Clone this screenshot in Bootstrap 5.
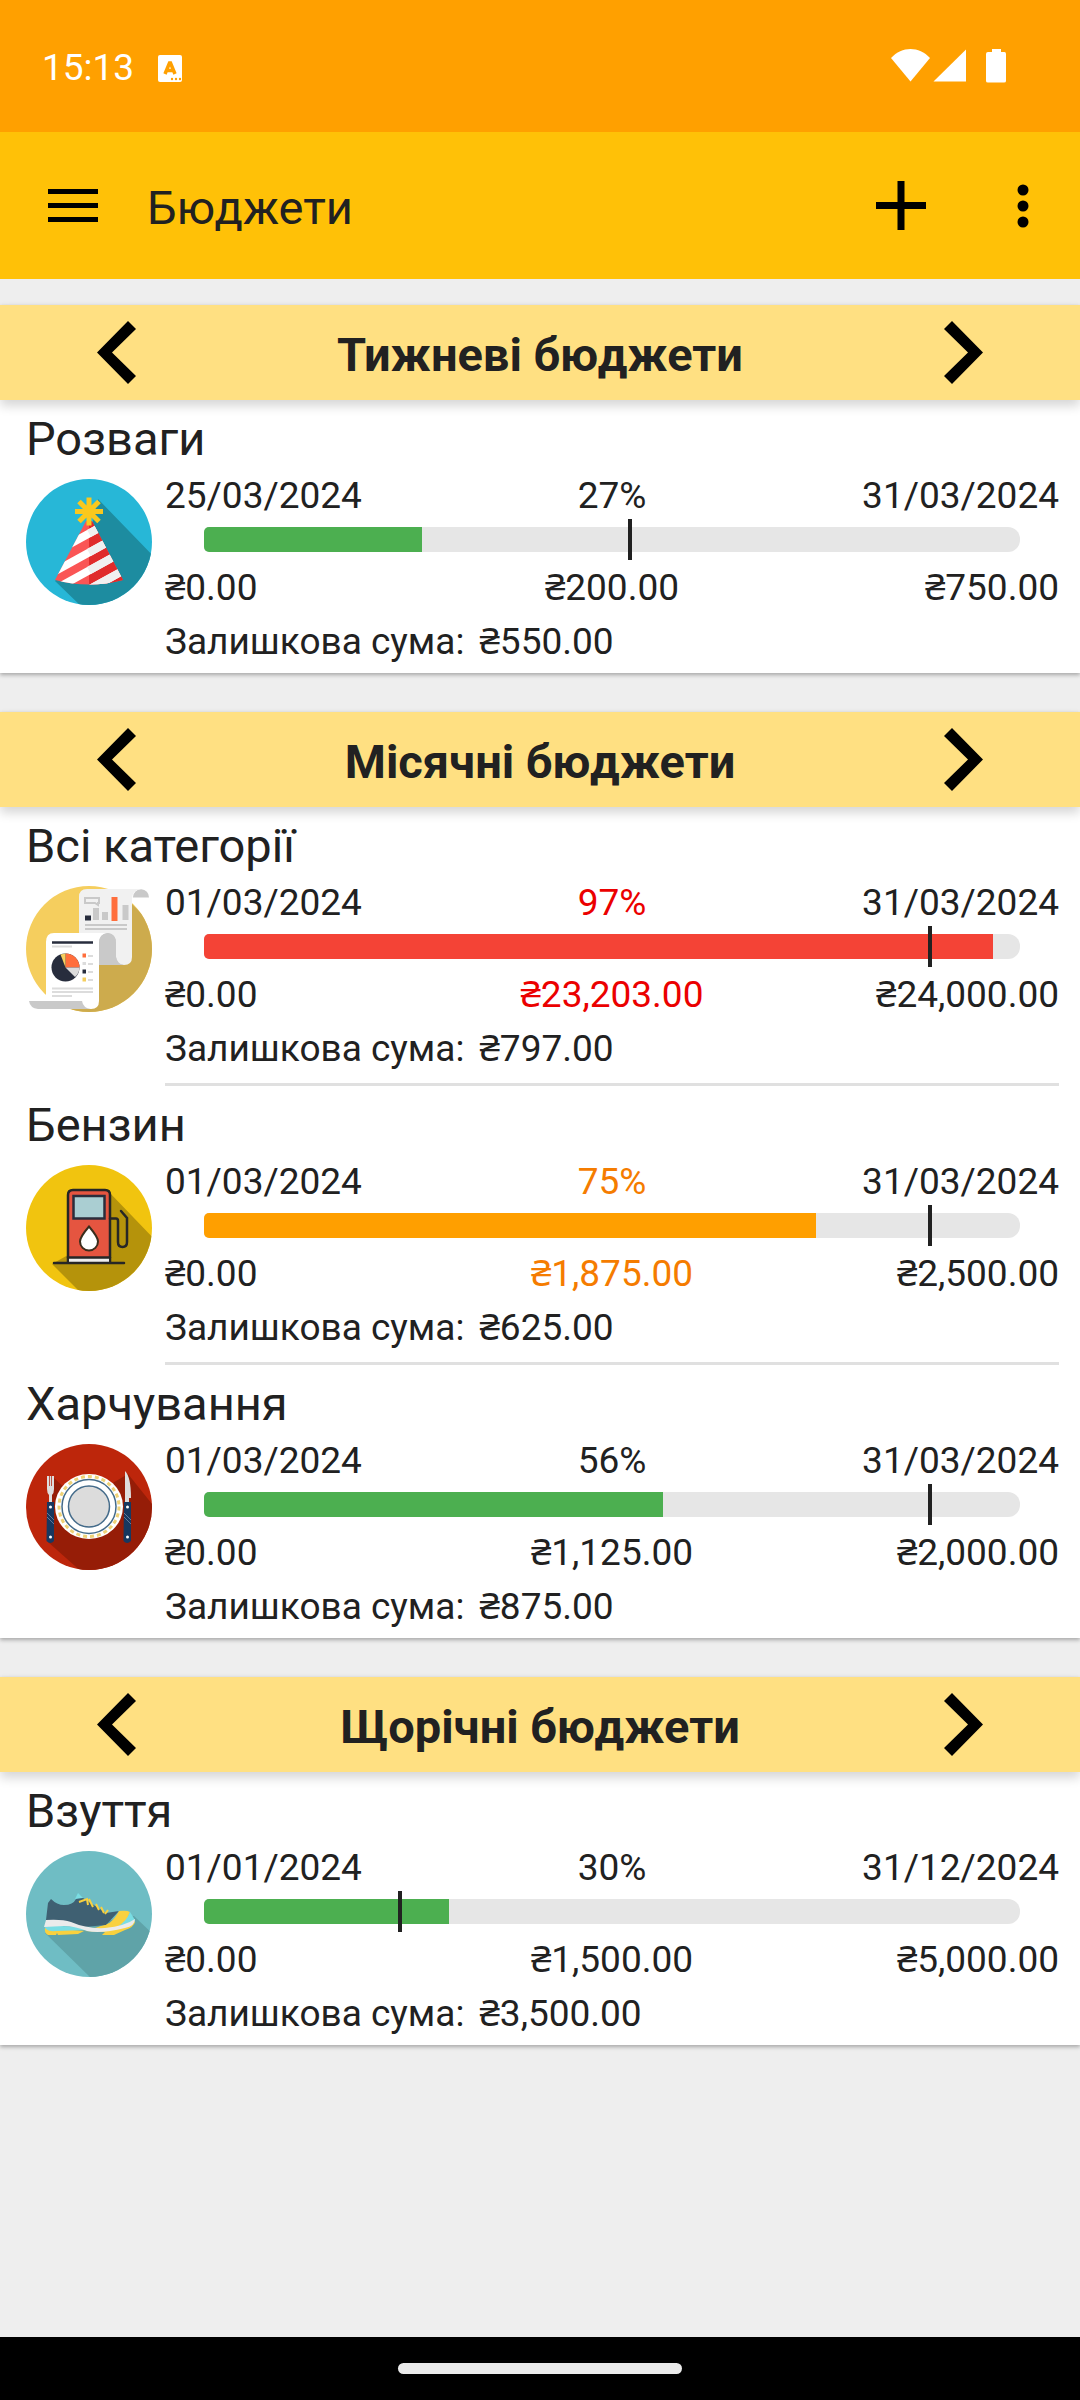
<!DOCTYPE html>
<html lang="uk">
<head>
<meta charset="utf-8">
<meta name="viewport" content="width=device-width, initial-scale=1">
<title>Бюджети</title>
<link href="https://cdn.jsdelivr.net/npm/bootstrap@5.3.0/dist/css/bootstrap.min.css" rel="stylesheet">
<style>
  body { font-family: Roboto, "Noto Sans", sans-serif; font-size: 37px; line-height: 44px; color: #212121; background: #eee; }
  .status-strip { background: #ffa000; height: 132px; padding: 0 74px 0 42px; }
  .app-bar { background: #ffc107; height: 147px; padding: 0 48px; }
  .app-title { font-size: 47px; line-height: 56px; padding: 4px 0 0 49px; font-weight: 400; }
  .plain-btn { background: none; border: 0; padding: 0; line-height: 0; color: #000; }
  .budget-list { padding-top: 26px; }
  .budget-group { margin-bottom: 39px; background: #fff; box-shadow: 0 2px 4px rgba(0,0,0,.3); }
  .group-head { height: 95px; padding: 0 97px; background: #ffe082; box-shadow: 0 6px 10px rgba(0,0,0,.16); }
  .group-title { font-size: 47px; line-height: 56px; font-weight: 700; padding-top: 4px; }
  .budget-item { padding: 11px 21px 9px 26px; }
  .item-title { font-size: 47px; line-height: 56px; font-weight: 400; margin-bottom: 7px; }
  .item-icon { width: 126px; height: 126px; margin: 5px 13px 0 0; }
  .meter { position: relative; height: 41px; margin: 1px 39px 5px; }
  .meter .progress { height: 25px; border-radius: 5px 12px 12px 5px; background: #e6e6e6; }
  .meter .progress-bar { transition: none; }
  .today { position: absolute; top: 0; width: 4px; height: 41px; margin-left: -2px; background: #212121; }
  .sums { padding-top: 1px; }
  .rest { margin-top: 10px; }
  .rest-sum { margin-left: 6px; }
  .fill-ok { background: #4caf50; }
  .fill-warn { background: #ff9f00; }
  .fill-over { background: #f44336; }
  .ink-warn { color: #f57c00; }
  .ink-over { color: #eb0000; }
  .item-rule { height: 3px; margin: 3px 21px 0 165px; background: #e0e0e0; }
  .gesture-bar { height: 63px; background: #000; }
  .gesture-pill { width: 284px; height: 11px; border-radius: 6px; background: #ebebeb; }
</style>
<script src="https://cdn.jsdelivr.net/npm/bootstrap@5.3.0/dist/js/bootstrap.bundle.min.js"></script>
</head>
<body class="d-flex flex-column min-vh-100">

<div class="status-strip d-flex align-items-center justify-content-between text-white">
  <div class="d-flex align-items-center pt-1">
    <span>15:13</span>
    <svg class="ms-4" width="24" height="27" viewBox="0 0 24 27" aria-hidden="true">
      <rect width="24" height="27" rx="2" fill="#fff"/>
      <path d="M7 19L11.500 8H12.500L17 19M9 15.500H15" fill="none" stroke="#ffa000" stroke-width="3.500"/>
      <g fill="#ffa000"><circle cx="14" cy="24" r="1.200"/><circle cx="18" cy="24" r="1.200"/><circle cx="22" cy="24" r="1.200"/></g>
    </svg>
  </div>
  <svg width="115" height="34" viewBox="0 0 115 34" fill="#fff" aria-hidden="true">
    <path d="M0 9C11-3 28-3 39 9L19.500 32.500Z"/>
    <path d="M75 .5V32.500H42.500Z"/>
    <path d="M101 0H110V3H113.500Q115 3 115 5V32Q115 33.500 113 33.500H97Q95 33.500 95 32V5Q95 3 97 3H101Z"/>
  </svg>
</div>

<header class="app-bar d-flex align-items-center">
  <button type="button" class="plain-btn" aria-label="Меню">
    <svg width="50" height="34" viewBox="0 0 50 34"><path d="M0 2.500H50M0 16.500H50M0 30.500H50" stroke="#000" stroke-width="5"/></svg>
  </button>
  <h1 class="app-title mb-0 me-auto">Бюджети</h1>
  <button type="button" class="plain-btn" aria-label="Додати">
    <svg width="50" height="50" viewBox="0 0 50 50"><path d="M0 24.500H50M25 0V49" stroke="#000" stroke-width="7"/></svg>
  </button>
  <button type="button" class="plain-btn ms-5" aria-label="Більше">
    <svg width="58" height="44" viewBox="0 0 58 44"><circle cx="49" cy="6" r="5.500"/><circle cx="49" cy="22" r="5.500"/><circle cx="49" cy="38" r="5.500"/></svg>
  </button>
</header>

<main class="budget-list flex-grow-1">

  <section class="budget-group">
    <div class="group-head d-flex align-items-center justify-content-between">
      <button type="button" class="plain-btn" aria-label="Назад"><svg width="39" height="63" viewBox="0 0 39 63"><path d="M31 0L39 8L15 31.500L39 55L31 63L0 31.500Z"/></svg></button>
      <h2 class="group-title mb-0">Тижневі бюджети</h2>
      <button type="button" class="plain-btn" aria-label="Вперед"><svg width="39" height="63" viewBox="0 0 39 63"><path d="M8 0L0 8L24 31.500L0 55L8 63L39 31.500Z"/></svg></button>
    </div>
    <article class="budget-item">
      <h3 class="item-title">Розваги</h3>
      <div class="d-flex align-items-start">
        <svg class="item-icon flex-shrink-0" viewBox="0 0 126 126" aria-hidden="true">
          <clipPath id="disc"><circle cx="63" cy="63" r="63"/></clipPath>
          <clipPath id="cone"><path d="M60 42H66L97 101Q63 110 29 101Z"/></clipPath>
          <g clip-path="url(#disc)">
            <rect width="126" height="126" fill="#27b7d7"/>
            <path d="M72 20L130 80V130H58L29 102L63 60Z" fill="#1d8ca0"/>
          </g>
          <g clip-path="url(#cone)">
            <rect x="20" y="35" width="85" height="75" fill="#fa5555"/>
            <rect x="63" y="35" width="45" height="75" fill="#e02b2b"/>
            <path d="M13 82L113 27M13 101L113 46M13 119L113 64M13 138L113 83" stroke="#fff" stroke-width="8"/>
            <path d="M63 54.500L113 27M63 73.500L113 46M63 91.500L113 64M63 110.500L113 83" stroke="#f0f0f0" stroke-width="8"/>
          </g>
          <path d="M63 18.500V46.500M49 32.500H77M53 22.500L73 42.500M73 22.500L53 42.500" stroke="#fac81e" stroke-width="5"/>
          <circle cx="63" cy="32.500" r="5" fill="#fac81e"/>
        </svg>
        <div class="flex-grow-1">
          <div class="row g-0"><span class="col">25/03/2024</span><span class="col text-center">27%</span><span class="col text-end">31/03/2024</span></div>
          <div class="meter d-flex align-items-center">
            <div class="progress flex-grow-1" role="progressbar" aria-label="Розваги" aria-valuenow="27" aria-valuemin="0" aria-valuemax="100"><div class="progress-bar fill-ok" style="width:26.7%"></div></div>
            <div class="today" style="left:52.2%"></div>
          </div>
          <div class="row g-0 sums"><span class="col">₴0.00</span><span class="col text-center">₴200.00</span><span class="col text-end">₴750.00</span></div>
          <div class="rest">Залишкова сума: <span class="rest-sum">₴550.00</span></div>
        </div>
      </div>
    </article>
  </section>

  <section class="budget-group">
    <div class="group-head d-flex align-items-center justify-content-between">
      <button type="button" class="plain-btn" aria-label="Назад"><svg width="39" height="63" viewBox="0 0 39 63"><path d="M31 0L39 8L15 31.500L39 55L31 63L0 31.500Z"/></svg></button>
      <h2 class="group-title mb-0">Місячні бюджети</h2>
      <button type="button" class="plain-btn" aria-label="Вперед"><svg width="39" height="63" viewBox="0 0 39 63"><path d="M8 0L0 8L24 31.500L0 55L8 63L39 31.500Z"/></svg></button>
    </div>
    <article class="budget-item">
      <h3 class="item-title">Всі категорії</h3>
      <div class="d-flex align-items-start">
        <svg class="item-icon flex-shrink-0" viewBox="0 0 126 126" aria-hidden="true">
          <g clip-path="url(#disc)">
            <rect width="126" height="126" fill="#f5ce5e"/>
            <path d="M100 12L130 42V130H52L40 118L72 78Z" fill="#cdab4d"/>
          </g>
          <path d="M107 11A8 8 0 0 1 123 11.500H107Z" fill="#c9c9c9"/>
          <path d="M61 3H115Q106 4 106 13V71Q106 79 98 79H53V11Q53 3 61 3Z" fill="#f1f1f1"/>
          <path d="M73 79V47H82Q90 48 90 57V71Q91 78 98 79Z" fill="#c9c9c9"/>
          <path d="M59 12H73V17H72V19L69 17H59Z" fill="#f1f1f1" stroke="#c9c9c9" stroke-width="2"/>
          <path d="M68 34V22M77 34V26M97.500 34V19" transform="translate(2 0)" stroke="#c9c9c9" stroke-width="6"/>
          <path d="M88.500 35V11" stroke="#ff6e3c" stroke-width="6"/>
          <path d="M59 32H65" stroke="#272d3d" stroke-width="5"/>
          <path d="M59 39H101M59 43H101" stroke="#c9c9c9" stroke-width="2"/>
          <path d="M3 115H56L66 123H12Q4 122 3 115Z" fill="#c9c9c9"/>
          <path d="M28 47H82Q73 48 73 57V115Q73 123 65 123Q57 122 56 115H20V56Q20 47 28 47Z" fill="#fff"/>
          <path d="M73 79V57Q73 48 81.500 47Q90 48 90 57V79Z" fill="#c9c9c9"/>
          <path d="M90 57V71Q91 78 98 79H90Z" fill="#c9c9c9"/>
          <path d="M26 56.500H67" stroke="#272d3d" stroke-width="2.500"/>
          <path d="M26 60.500H46M26 102.500H67M26 106H67M26 110H46M62 70H67M62 78H67M62 86H67M62 94H67" stroke="#dcdcdc" stroke-width="2"/>
          <circle cx="39.500" cy="81.500" r="14" fill="#272d3d"/>
          <path d="M39.500 81.500V67.500A14 14 0 0 1 53.500 81.500Z" fill="#ff6e3c"/>
          <path d="M39.500 81.500H53.500Q53 88 49 91Z" fill="#dcdcdc"/>
          <path d="M39.500 81.500L34.500 68.500L39.500 67.500Z" fill="#f5ce5e"/>
          <path d="M56.500 69.500H60" stroke="#ff6e3c" stroke-width="4"/><path d="M56.500 77.500H60" stroke="#dcdcdc" stroke-width="3"/><path d="M56.500 85.500H60" stroke="#272d3d" stroke-width="4"/><path d="M56.500 93.500H60" stroke="#f5ce5e" stroke-width="4"/>
        </svg>
        <div class="flex-grow-1">
          <div class="row g-0"><span class="col">01/03/2024</span><span class="col text-center ink-over">97%</span><span class="col text-end">31/03/2024</span></div>
          <div class="meter d-flex align-items-center">
            <div class="progress flex-grow-1" role="progressbar" aria-label="Всі категорії" aria-valuenow="97" aria-valuemin="0" aria-valuemax="100"><div class="progress-bar fill-over" style="width:96.7%"></div></div>
            <div class="today" style="left:89%"></div>
          </div>
          <div class="row g-0 sums"><span class="col">₴0.00</span><span class="col text-center ink-over">₴23,203.00</span><span class="col text-end">₴24,000.00</span></div>
          <div class="rest">Залишкова сума: <span class="rest-sum">₴797.00</span></div>
        </div>
      </div>
    </article>
    <div class="item-rule"></div>
    <article class="budget-item">
      <h3 class="item-title">Бензин</h3>
      <div class="d-flex align-items-start">
        <svg class="item-icon flex-shrink-0" viewBox="0 0 126 126" aria-hidden="true">
          <g clip-path="url(#disc)">
            <rect width="126" height="126" fill="#f1c40f"/>
            <path d="M82 26L130 76V130H57L26 99L60 80Z" fill="#b5930b"/>
          </g>
          <path d="M42 97V30Q42 25 47 25H79Q84 25 84 30V97Z" fill="#e55540" stroke="#262626" stroke-width="2.500"/>
          <rect x="43" y="93" width="40" height="5" fill="#eee"/>
          <path d="M42 92.500H84M28 98H98" stroke="#262626" stroke-width="2.500" stroke-linecap="round"/>
          <rect x="47.500" y="31" width="31" height="22.500" fill="#aaced2" stroke="#2b2d3b" stroke-width="2.500"/>
          <path d="M63 61.500Q54 72 54 76.500A9 9 0 0 0 72 76.500Q72 72 63 61.500Z" fill="#fff" stroke="#3a2d1c" stroke-width="2"/>
          <path d="M84 53.500H90Q92 53.500 92 56V77Q92 82 96.500 82Q101 82 101 77V53L95 46" fill="none" stroke="#262626" stroke-width="2.500" stroke-linecap="round"/>
        </svg>
        <div class="flex-grow-1">
          <div class="row g-0"><span class="col">01/03/2024</span><span class="col text-center ink-warn">75%</span><span class="col text-end">31/03/2024</span></div>
          <div class="meter d-flex align-items-center">
            <div class="progress flex-grow-1" role="progressbar" aria-label="Бензин" aria-valuenow="75" aria-valuemin="0" aria-valuemax="100"><div class="progress-bar fill-warn" style="width:75%"></div></div>
            <div class="today" style="left:89%"></div>
          </div>
          <div class="row g-0 sums"><span class="col">₴0.00</span><span class="col text-center ink-warn">₴1,875.00</span><span class="col text-end">₴2,500.00</span></div>
          <div class="rest">Залишкова сума: <span class="rest-sum">₴625.00</span></div>
        </div>
      </div>
    </article>
    <div class="item-rule"></div>
    <article class="budget-item">
      <h3 class="item-title">Харчування</h3>
      <div class="d-flex align-items-start">
        <svg class="item-icon flex-shrink-0" viewBox="0 0 126 126" aria-hidden="true">
          <g clip-path="url(#disc)">
            <rect width="126" height="126" fill="#bd260b"/>
            <path d="M27 33L45 50L85 40L102 30L130 65V130H58L22 98Z" fill="#961d07"/>
          </g>
          <ellipse cx="63" cy="62.500" rx="34" ry="32.500" fill="#fff"/>
          <circle cx="63" cy="62.500" r="30" fill="none" stroke="#eed277" stroke-width="3" stroke-dasharray="4 3"/>
          <circle cx="63" cy="62.500" r="27" fill="#fff" stroke="#446b8a" stroke-width="1.500"/>
          <circle cx="63" cy="62.500" r="20.500" fill="#dcdcdc" stroke="#446b8a" stroke-width="1.500"/>
          <path d="M21 32H28V45Q28 49 26 51V58H23V51Q21 49 21 45Z" fill="#dedede"/>
          <path d="M23.500 32V42M25.500 32V42" stroke="#bd5545" stroke-width="1"/>
          <path d="M99 27Q105 33 105 54H103V58H99Z" fill="#dedede"/>
          <path d="M21 58H28V97Q24.500 101 20.500 97ZM98 58H105V97Q101 101 97.500 97Z" fill="#173860"/>
          <path d="M21 69L28 76M98 69L105 76M21 73L28 80M98 73L105 80" stroke="#61799a" stroke-width="1"/>
          <g fill="#fff"><circle cx="24.500" cy="63" r="1.500"/><circle cx="24.500" cy="93" r="1.500"/><circle cx="101.500" cy="63" r="1.500"/><circle cx="101.500" cy="93" r="1.500"/></g>
        </svg>
        <div class="flex-grow-1">
          <div class="row g-0"><span class="col">01/03/2024</span><span class="col text-center">56%</span><span class="col text-end">31/03/2024</span></div>
          <div class="meter d-flex align-items-center">
            <div class="progress flex-grow-1" role="progressbar" aria-label="Харчування" aria-valuenow="56" aria-valuemin="0" aria-valuemax="100"><div class="progress-bar fill-ok" style="width:56.25%"></div></div>
            <div class="today" style="left:89%"></div>
          </div>
          <div class="row g-0 sums"><span class="col">₴0.00</span><span class="col text-center">₴1,125.00</span><span class="col text-end">₴2,000.00</span></div>
          <div class="rest">Залишкова сума: <span class="rest-sum">₴875.00</span></div>
        </div>
      </div>
    </article>
  </section>

  <section class="budget-group">
    <div class="group-head d-flex align-items-center justify-content-between">
      <button type="button" class="plain-btn" aria-label="Назад"><svg width="39" height="63" viewBox="0 0 39 63"><path d="M31 0L39 8L15 31.500L39 55L31 63L0 31.500Z"/></svg></button>
      <h2 class="group-title mb-0">Щорічні бюджети</h2>
      <button type="button" class="plain-btn" aria-label="Вперед"><svg width="39" height="63" viewBox="0 0 39 63"><path d="M8 0L0 8L24 31.500L0 55L8 63L39 31.500Z"/></svg></button>
    </div>
    <article class="budget-item">
      <h3 class="item-title">Взуття</h3>
      <div class="d-flex align-items-start">
        <svg class="item-icon flex-shrink-0" viewBox="0 0 126 126" aria-hidden="true">
          <g clip-path="url(#disc)">
            <rect width="126" height="126" fill="#6fbdc4"/>
            <path d="M108 65L130 86V130H68L19 82L80 70Z" fill="#5fa3a8"/>
          </g>
          <path d="M49 48L52 42L57 47Z" fill="#7adde3"/>
          <path d="M19 77L60 80L105 65L109 71Q108 76 99 79L88 84H76L79 81L58 80L52 83L32 84L31 82L30 84H22Q18 82 19 77Z" fill="#f9d13f"/>
          <path d="M19 74L50 76L62 79L30 80Q18 81 19 74Z" fill="#7adde3"/>
          <path d="M20 69L22 52L25 48Q31 54 38 54Q47 54 50 48L57 47L80 62L93 60L80 74L58 76Z" fill="#3f6072"/>
          <path d="M93 60Q101 59 104 61L101 68Q90 77 77 78L73 76Q85 75 93 60Z" fill="#f9d13f"/>
          <path d="M104 61L109 69L106 73L91 76Q101 70 104 61Z" fill="#7adde3"/>
          <path d="M20 69Q36 68 45 71Q61 78 79 77Q99 75 109 68Q109 75 99 77Q75 83 61 80Q48 75 38 75L18 76Z" fill="#ebebeb"/>
          <path d="M53 51L61 48L62 54M63 48L67 56M70 53L73 59M75 56L78 62M82 59L79 63" fill="none" stroke="#f9d13f" stroke-width="2"/>
        </svg>
        <div class="flex-grow-1">
          <div class="row g-0"><span class="col">01/01/2024</span><span class="col text-center">30%</span><span class="col text-end">31/12/2024</span></div>
          <div class="meter d-flex align-items-center">
            <div class="progress flex-grow-1" role="progressbar" aria-label="Взуття" aria-valuenow="30" aria-valuemin="0" aria-valuemax="100"><div class="progress-bar fill-ok" style="width:30%"></div></div>
            <div class="today" style="left:24%"></div>
          </div>
          <div class="row g-0 sums"><span class="col">₴0.00</span><span class="col text-center">₴1,500.00</span><span class="col text-end">₴5,000.00</span></div>
          <div class="rest">Залишкова сума: <span class="rest-sum">₴3,500.00</span></div>
        </div>
      </div>
    </article>
  </section>
</main>

<div class="gesture-bar d-flex align-items-center justify-content-center"><div class="gesture-pill"></div></div>
</body>
</html>
